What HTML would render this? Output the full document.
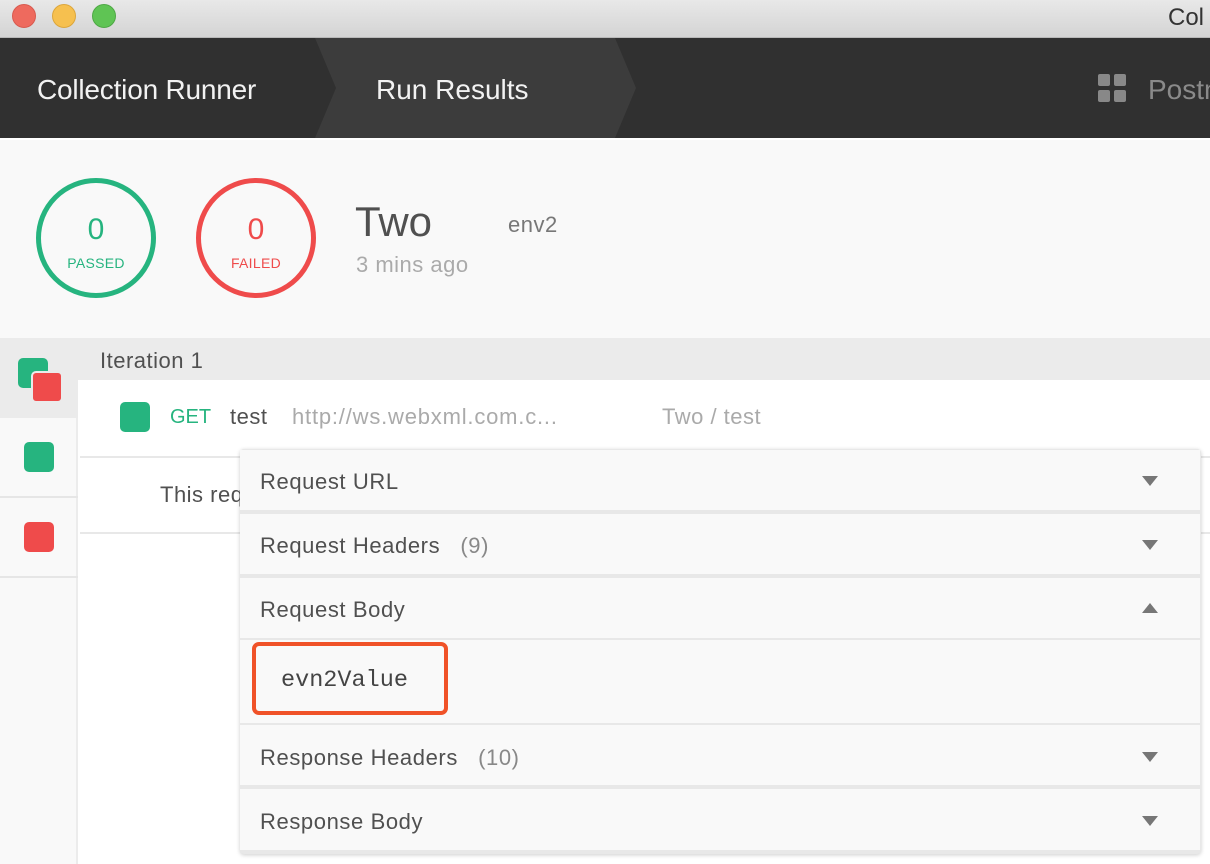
<!DOCTYPE html>
<html><head><meta charset="utf-8"><style>
*{margin:0;padding:0;box-sizing:border-box}
body{width:1210px;height:864px;overflow:hidden;background:#fff;font-family:"Liberation Sans",sans-serif;position:relative;color:#505050}
.a{position:absolute;white-space:nowrap}
.title{left:0;top:0;width:1210px;height:38px;background:linear-gradient(#e8e8e8,#d4d4d4);border-bottom:1px solid #b8b8b8}
.dot{width:24px;height:24px;border-radius:50%;top:4px}
.nav{left:0;top:38px;width:1210px;height:100px;background:#303030}
.sec{top:140px;left:0;width:1210px;height:198px;background:#f9f9f9}
.circ{width:120px;height:120px;border-radius:50%;top:178px;border:5px solid;text-align:center}
.circ .n{font-size:30px;margin-top:30px;line-height:34px}
.circ .l{font-size:14px;margin-top:8px;letter-spacing:.3px}
.sq{width:30px;height:30px;border-radius:5px}
.ps{left:240px;width:960px;background:#f9f9f9}
.ph{font-size:22px;color:#505050;left:260px;letter-spacing:.6px}
.tri{width:0;height:0;border-left:8px solid transparent;border-right:8px solid transparent;left:1142px}
.dn{border-top:10px solid #777}
.up{border-bottom:10px solid #777}
</style></head><body>
<div class="a title"></div>
<div class="a dot" style="left:12px;background:#ee6a5e;border:1px solid #d85a4f"></div>
<div class="a dot" style="left:52px;background:#f6c04f;border:1px solid #dca63b"></div>
<div class="a dot" style="left:92px;background:#5fc454;border:1px solid #4ea845"></div>
<div class="a" style="left:1168px;top:4px;font-size:24px;color:#333">Col</div>
<div class="a nav"></div>
<svg class="a" style="left:0;top:38px" width="650" height="100"><polygon points="255,0 615,0 636,50 615,100 255,100 276,50" fill="#3c3c3c"/><polygon points="0,0 315,0 336,50 315,100 0,100" fill="#303030"/></svg>
<div class="a" style="left:37px;top:74px;font-size:28px;color:#f2f2f2;letter-spacing:-.2px">Collection Runner</div>
<div class="a" style="left:376px;top:74px;font-size:28px;color:#f2f2f2">Run Results</div>
<div class="a" style="left:1098px;top:74px;width:12px;height:12px;background:#888;border-radius:2px"></div>
<div class="a" style="left:1114px;top:74px;width:12px;height:12px;background:#888;border-radius:2px"></div>
<div class="a" style="left:1098px;top:90px;width:12px;height:12px;background:#888;border-radius:2px"></div>
<div class="a" style="left:1114px;top:90px;width:12px;height:12px;background:#888;border-radius:2px"></div>
<div class="a" style="left:1148px;top:74px;font-size:28px;color:#8a8a8a">Postm</div>
<div class="a sec"></div>
<div class="a circ" style="left:36px;border-color:#26b47f;color:#26b47f"><div class="n">0</div><div class="l">PASSED</div></div>
<div class="a circ" style="left:196px;border-color:#ef4b4b;color:#ef4b4b"><div class="n">0</div><div class="l">FAILED</div></div>
<div class="a" style="left:355px;top:198px;font-size:42px;color:#505050">Two</div>
<div class="a" style="left:508px;top:212px;font-size:22px;color:#777;letter-spacing:.5px">env2</div>
<div class="a" style="left:356px;top:252px;font-size:22px;color:#aaa;letter-spacing:.5px">3 mins ago</div>
<div class="a" style="left:0;top:338px;width:1210px;height:42px;background:#ebebeb"></div>
<div class="a" style="left:0;top:380px;width:78px;height:484px;background:#f9f9f9;border-right:2px solid #ececec"></div>
<div class="a" style="left:0;top:338px;width:78px;height:80px;background:#ebebeb"></div>
<div class="a" style="left:0;top:496px;width:78px;height:2px;background:#e6e6e6"></div>
<div class="a" style="left:0;top:576px;width:78px;height:2px;background:#e6e6e6"></div>
<div class="a sq" style="left:18px;top:358px;background:#26b47f"></div>
<div class="a sq" style="background:#ef4b4b;border:2px solid #ebebeb;width:32px;height:32px;left:31px;top:371px"></div>
<div class="a sq" style="left:24px;top:442px;background:#26b47f"></div>
<div class="a sq" style="left:24px;top:522px;background:#ef4b4b"></div>
<div class="a" style="left:100px;top:348px;font-size:22px;color:#505050;letter-spacing:.5px">Iteration 1</div>
<div class="a sq" style="left:120px;top:402px;background:#26b47f"></div>
<div class="a" style="left:170px;top:406px;font-size:20px;color:#26b47f">GET</div>
<div class="a" style="left:230px;top:404px;font-size:22px;color:#505050;letter-spacing:.5px">test</div>
<div class="a" style="left:292px;top:404px;font-size:22px;color:#aaa;letter-spacing:.8px">http://ws.webxml.com.c...</div>
<div class="a" style="left:662px;top:404px;font-size:22px;color:#aaa;letter-spacing:.5px">Two / test</div>
<div class="a" style="left:80px;top:456px;width:1130px;height:2px;background:#e8e8e8"></div>
<div class="a" style="left:80px;top:532px;width:1130px;height:2px;background:#e8e8e8"></div>
<div class="a" style="left:160px;top:482px;font-size:22px;color:#505050;letter-spacing:.5px">This req</div>
<div class="a" style="left:240px;top:449px;width:961px;height:405px;background:#e8e8e8;border-radius:4px;box-shadow:0 1px 4px rgba(0,0,0,.2)"></div>
<div class="a ps" style="top:450px;height:60px"></div>
<div class="a ps" style="top:514px;height:60px"></div>
<div class="a ps" style="top:578px;height:60px"></div>
<div class="a ps" style="top:640px;height:83px"></div>
<div class="a ps" style="top:725px;height:60px"></div>
<div class="a ps" style="top:789px;height:61px"></div>
<div class="a ph" style="top:469px">Request URL</div>
<div class="a ph" style="top:533px">Request Headers &nbsp;&nbsp;<span style="color:#888">(9)</span></div>
<div class="a ph" style="top:597px">Request Body</div>
<div class="a ph" style="top:745px">Response Headers &nbsp;&nbsp;<span style="color:#888">(10)</span></div>
<div class="a ph" style="top:809px">Response Body</div>
<div class="a tri dn" style="top:476px"></div>
<div class="a tri dn" style="top:540px"></div>
<div class="a tri up" style="top:603px"></div>
<div class="a tri dn" style="top:752px"></div>
<div class="a tri dn" style="top:816px"></div>
<div class="a" style="left:252px;top:642px;width:196px;height:73px;border:4px solid #f05228;border-radius:7px"></div>
<div class="a" style="left:281px;top:667px;font-family:'Liberation Mono',monospace;font-size:23.5px;color:#444">evn2Value</div>
</body></html>
